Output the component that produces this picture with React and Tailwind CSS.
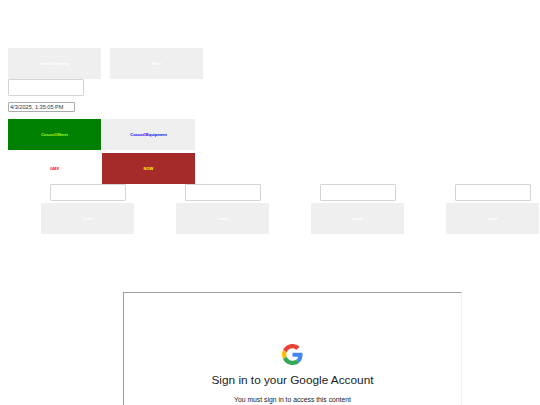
const loads = [1, 2, 3, 4];

function Btn({ className = '', children }) {
  return (
    <button className={`h-[31px] w-[93px] flex items-center justify-center text-[4px] font-bold ${className}`}>
      {children}
    </button>
  );
}

function Field({ className = '' }) {
  return <input className={`block h-[17px] w-[76px] border border-[#d4d4d4] rounded-[1px] bg-white ${className}`} />;
}

function GoogleG() {
  return (
    <svg viewBox="0 0 48 48" className="w-[21px] h-[21px]">
      <path fill="#EA4335" d="M24 9.5c3.54 0 6.71 1.22 9.21 3.6l6.85-6.85C35.9 2.38 30.47 0 24 0 14.62 0 6.51 5.38 2.56 13.22l7.98 6.19C12.43 13.72 17.74 9.5 24 9.5z" />
      <path fill="#4285F4" d="M46.98 24.55c0-1.57-.15-3.09-.38-4.55H24v9.02h12.94c-.58 2.96-2.26 5.48-4.78 7.18l7.73 6c4.51-4.18 7.09-10.36 7.09-17.65z" />
      <path fill="#FBBC05" d="M10.53 28.59c-.48-1.45-.76-2.99-.76-4.59s.27-3.14.76-4.59l-7.98-6.19C.92 16.46 0 20.12 0 24c0 3.88.92 7.54 2.56 10.78l7.97-6.19z" />
      <path fill="#34A853" d="M24 48c6.48 0 11.93-2.13 15.89-5.81l-7.73-6c-2.15 1.45-4.92 2.3-8.16 2.3-6.26 0-11.57-4.22-13.47-9.91l-7.98 6.19C6.51 42.62 14.62 48 24 48z" />
    </svg>
  );
}

export default function App() {
  return (
    <div className="h-[405px] w-[540px] overflow-hidden bg-white pt-[48px] font-['Liberation_Sans',Arial,sans-serif]">
      <div className="flex gap-[9px] pl-[8px]">
        <Btn className="bg-[#efefef] text-white">DateTimeStamp</Btn>
        <Btn className="bg-[#efefef] text-white">Paste</Btn>
      </div>
      <Field className="ml-[8px]" />
      <input
        readOnly
        value="4/3/2025, 1:35:05 PM"
        className="mt-[6px] ml-[8px] block h-[10px] w-[67px] border border-[#ababab] rounded-[1px] px-[1px] text-[5.6px] leading-none text-[#333333]"
      />
      <div className="mt-[7px] ml-[8px] grid w-[187px] grid-cols-[93px_93px] gap-x-[1px] gap-y-[3px]">
        <Btn className="bg-[#008000] text-[#adff2f]">Coscot1Sheet</Btn>
        <Btn className="bg-[#efefef] text-[#0000ff]">Coscot1Equipment</Btn>
        <Btn className="bg-white text-[#ff0000]">GMX</Btn>
        <Btn className="bg-[#a52a2a] text-[#ffff00]">NOW</Btn>
      </div>
      <div className="flex pl-[20px]">
        {loads.map(n => (
          <div key={n} className="flex w-[135px] shrink-0 flex-col items-center gap-[2px]">
            <Field />
            <Btn className="bg-[#efefef] text-white">Load</Btn>
          </div>
        ))}
      </div>
      <div className="mt-[58px] ml-[123px] flex w-[339px] flex-col items-center border-t border-l border-r border-t-[#a0a0a0] border-l-[#a0a0a0] border-r-[#f0f0f0] pt-[51px] pb-[40px]">
        <GoogleG />
        <h1 className="mt-[8px] text-[11.8px] leading-[15px] text-[#202124]">Sign in to your Google Account</h1>
        <p className="mt-[7px] text-[6.8px] leading-[9px] text-[#202124]">You must sign in to access this content</p>
      </div>
    </div>
  );
}
